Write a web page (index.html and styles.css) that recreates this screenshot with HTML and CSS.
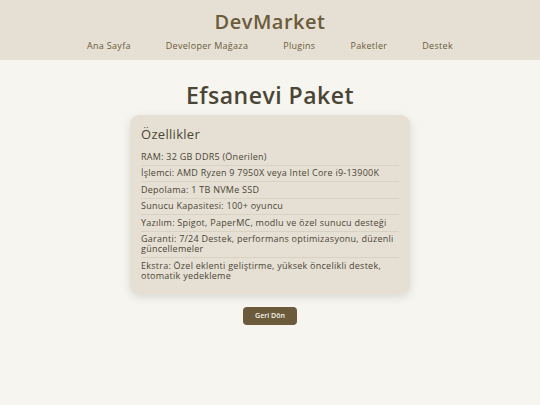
FILE: index.html
```html
<!DOCTYPE html>
<html lang="tr">
<head>
  <meta charset="UTF-8">
  <meta name="viewport" content="width=device-width, initial-scale=1.0">
  <title>Efsanevi Paket | DevMarket</title>
  <link rel="stylesheet" href="styles.css">
</head>
<body>
  <header class="site-header">
    <div class="logo">DevMarket</div>
    <nav class="nav">
      <a href="#" class="nav-link">Ana Sayfa</a>
      <a href="#" class="nav-link">Developer Mağaza</a>
      <a href="#" class="nav-link">Plugins</a>
      <a href="#" class="nav-link">Paketler</a>
      <a href="#" class="nav-link">Destek</a>
    </nav>
  </header>

  <main class="content">
    <h1 class="page-title">Efsanevi Paket</h1>

    <div class="card">
      <h2 class="card-title">Özellikler</h2>
      <ul class="features">
        <li>RAM: 32 GB DDR5 (Önerilen)</li>
        <li>İşlemci: AMD Ryzen 9 7950X veya Intel Core i9-13900K</li>
        <li>Depolama: 1 TB NVMe SSD</li>
        <li>Sunucu Kapasitesi: 100+ oyuncu</li>
        <li>Yazılım: Spigot, PaperMC, modlu ve özel sunucu desteği</li>
        <li>Garanti: 7/24 Destek, performans optimizasyonu, düzenli güncellemeler</li>
        <li>Ekstra: Özel eklenti geliştirme, yüksek öncelikli destek, otomatik yedekleme</li>
      </ul>
    </div>

    <a href="#" class="back-btn">Geri Dön</a>
  </main>
</body>
</html>
```

FILE: styles.css
```css
* {
  margin: 0;
  padding: 0;
  box-sizing: border-box;
}

html, body {
  height: 100%;
  background: #f7f5ef;
  font-family: "Open Sans", "DejaVu Sans", sans-serif;
  color: #4a4535;
}

.site-header {
  background: #e6e0d4;
  height: 60px;
  padding-top: 9px;
  text-align: center;
}

.logo {
  color: #6b5b3a;
  font-size: 20px;
  font-weight: 600;
  line-height: 26px;
  letter-spacing: 0.5px;
}

.nav {
  display: flex;
  justify-content: center;
  gap: 35px;
  margin-top: 3px;
}

.nav-link {
  color: #6b5b3a;
  font-size: 9px;
  line-height: 16px;
  letter-spacing: 0.3px;
  text-decoration: none;
}

.content {
  display: flex;
  flex-direction: column;
  align-items: center;
  padding-top: 20px;
}

.page-title {
  color: #4a4535;
  font-size: 23px;
  font-weight: 600;
  line-height: 30px;
  letter-spacing: 0.5px;
}

.card {
  width: 280px;
  margin-top: 5px;
  background: #e6e0d4;
  border-radius: 9px;
  padding: 10px 11px 10px;
  box-shadow: 0 3px 10px rgba(0, 0, 0, 0.12);
}

.card-title {
  font-size: 13px;
  font-weight: 400;
  line-height: 18px;
  letter-spacing: 0.3px;
  margin-bottom: 6px;
}

.features {
  list-style: none;
}

.features li {
  font-size: 9px;
  line-height: 10px;
  letter-spacing: 0.25px;
  padding: 2.75px 0;
  border-bottom: 1px solid #d9d2c3;
}

.features li:last-child {
  border-bottom: none;
}

.back-btn {
  margin-top: 13px;
  background: #6b5b3a;
  color: #f7f5ef;
  font-size: 7px;
  font-weight: 600;
  text-decoration: none;
  line-height: 18px;
  padding: 0 12px;
  border-radius: 4px;
}
```
